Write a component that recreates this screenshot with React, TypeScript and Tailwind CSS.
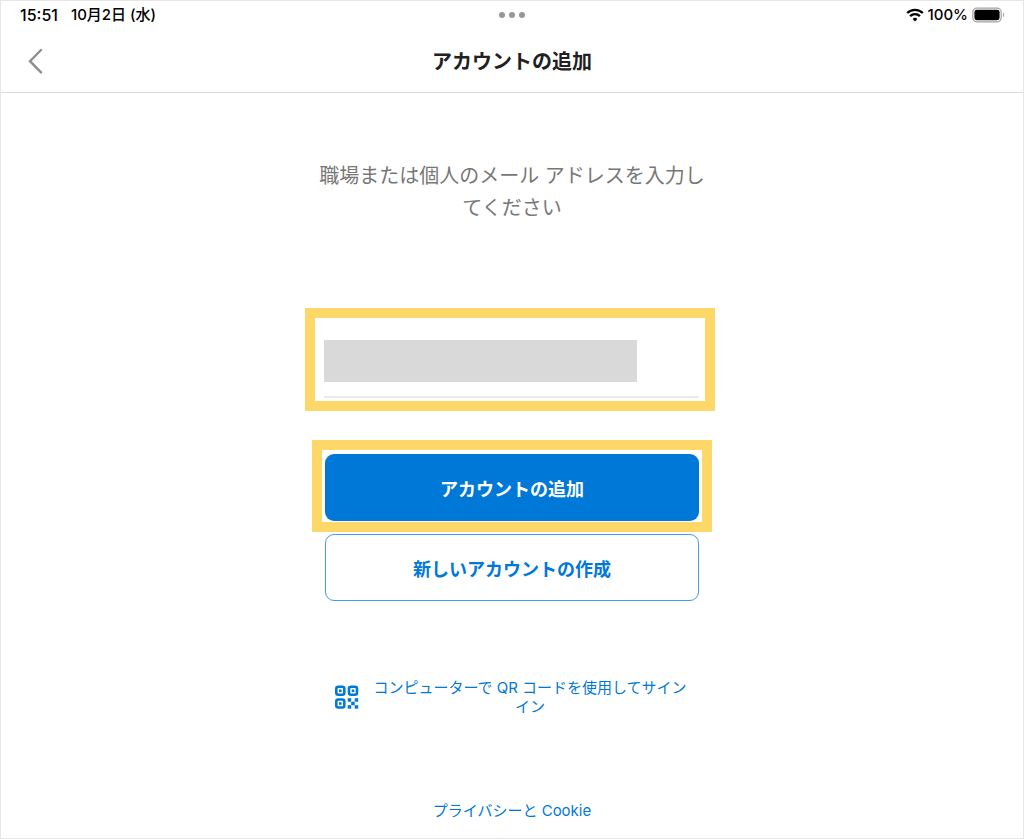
import React from "react";

const WifiIcon = () => (
  <svg width="18" height="14" viewBox="0 0 18 14" fill="none" aria-hidden="true">
    <path d="M1.2 5 A11.2 11.2 0 0 1 16.8 5" stroke="#000" strokeWidth="2.4" />
    <path d="M4.1 8.2 A6.9 6.9 0 0 1 13.9 8.2" stroke="#000" strokeWidth="2.4" />
    <path d="M9 13.4 L6.6 11 A3.4 3.4 0 0 1 11.4 11 Z" fill="#000" />
  </svg>
);

const BatteryIcon = () => (
  <svg width="33" height="16" viewBox="0 0 33 16" fill="none" aria-hidden="true">
    <rect x="0.8" y="1.2" width="28.4" height="13.6" rx="4" stroke="#a3a3a3" strokeWidth="1.2" />
    <rect x="2.4" y="2.8" width="25.2" height="10.4" rx="2.4" fill="#000" />
    <path d="M31 5.6 C32.6 6.4 32.6 9.6 31 10.4 Z" fill="#a3a3a3" />
  </svg>
);

const QrIcon = () => (
  <svg
    className="flex-none"
    width="24"
    height="24"
    viewBox="0 0 24 24"
    fill="none"
    aria-hidden="true"
  >
    <g stroke="#0078d7" strokeWidth="2.6">
      <rect x="1.3" y="1.8" width="8" height="8" rx="2" />
      <rect x="14" y="1.8" width="8" height="8" rx="2" />
      <rect x="1.3" y="14.5" width="8" height="8" rx="2" />
    </g>
    <g fill="#0078d7">
      <rect x="4" y="4.5" width="2.6" height="2.6" />
      <rect x="16.7" y="4.5" width="2.6" height="2.6" />
      <rect x="4" y="17.2" width="2.6" height="2.6" />
      <rect x="12.7" y="13.2" width="3.5" height="3.5" />
      <rect x="19.7" y="13.2" width="3.5" height="3.5" />
      <rect x="16.2" y="16.7" width="3.5" height="3.5" />
      <rect x="12.7" y="20.2" width="3.5" height="3.5" />
      <rect x="19.7" y="20.2" width="3.5" height="3.5" />
    </g>
  </svg>
);

const App = () => {
  return (
    <div
      lang="ja"
      className="min-h-screen flex flex-col border border-[#e6e6e6] bg-white font-['Inter','Noto_Sans_CJK_JP',sans-serif]"
    >
      <header className="border-b border-[#dcdcdc]">
        {/* Status bar */}
        <div className="grid grid-cols-3 items-center h-7 pl-[19px] pr-[18px] leading-5 font-medium text-black">
          <div className="flex gap-[13px] text-[15px] leading-5">
            <span className="text-base leading-5">15:51</span>
            <span>10月2日 (水)</span>
          </div>
          <div className="flex justify-center gap-1">
            <span className="size-1.5 rounded-full bg-[#979797]"></span>
            <span className="size-1.5 rounded-full bg-[#979797]"></span>
            <span className="size-1.5 rounded-full bg-[#979797]"></span>
          </div>
          <div className="flex items-center justify-end gap-1 text-[15px] leading-5">
            <WifiIcon />
            <span>100%</span>
            <BatteryIcon />
          </div>
        </div>

        {/* Title bar */}
        <div className="grid grid-cols-[48px_1fr_48px] items-center h-[63px] px-[19px]">
          <button type="button" aria-label="戻る" className="justify-self-start p-2">
            <svg width="15" height="26" viewBox="0 0 15 26" fill="none" aria-hidden="true">
              <path d="M13 2 L2 13.2 L13 24.4" stroke="#8e8e8e" strokeWidth="2.4" strokeLinecap="round" />
            </svg>
          </button>
          <h1 className="pt-0.5 text-center text-xl font-bold text-[#212121]">
            アカウントの追加
          </h1>
        </div>
      </header>

      <main className="flex-1 flex flex-col w-full max-w-[374px] mx-auto pt-[67px]">
        <p className="-mx-3 text-center text-xl leading-8 text-[#777777]">
          職場または個人のメール アドレスを入力してください
        </p>

        {/* Mail address */}
        <div className="mt-[84px] -ml-5 -mr-4 border-10 border-[#fdd868] pt-[22px] pb-[3px] pl-[9px] pr-1.5">
          <div className="border-b-2 border-[#ebebef] pb-[14px]">
            <input
              type="email"
              aria-label="メール アドレス"
              className="block w-[313px] h-[42px] bg-[#d9d9d9] px-2 outline-none"
            />
          </div>
        </div>

        <div className="mt-[29px] -mx-[13px] border-10 border-[#fdd868] px-[3px] pt-1 pb-px">
          <button
            type="button"
            className="block w-full h-[67px] pt-1 rounded-[9px] bg-[#0078d7] text-lg font-bold text-white"
          >
            アカウントの追加
          </button>
        </div>
        <button
          type="button"
          className="mt-[2px] w-full h-[67px] pt-1 rounded-[9px] border border-[#4a9de2] text-lg font-bold text-[#0078d7]"
        >
          新しいアカウントの作成
        </button>

        <a
          href="#qr"
          className="mt-[77px] flex items-center gap-3 px-[10px] text-[15px] leading-[19px] text-[#0078d7]"
        >
          <QrIcon />
          <span className="flex-1 text-center">
            コンピューターで QR コードを使用してサインイン
          </span>
        </a>
      </main>

      <footer className="pt-8 pb-[17px] text-center text-[15px] leading-5">
        <a href="#privacy" className="text-[#0078d7]">
          プライバシーと Cookie
        </a>
      </footer>
    </div>
  );
};

export default App;
